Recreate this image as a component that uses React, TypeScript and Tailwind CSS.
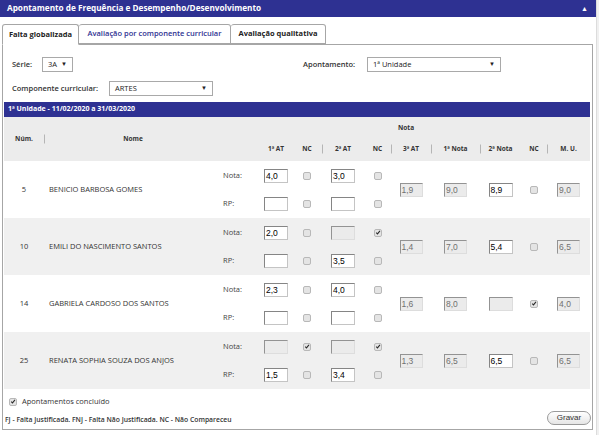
import React from 'react';

type Val = { v?: string; on: boolean };

type Student = {
  num: string;
  name: string;
  nota: [Val, boolean, Val, boolean];
  rp: [Val, boolean, Val, boolean];
  at3: string;
  nota1: string;
  nota2: Val;
  nc: boolean;
  mu: string;
};

const STUDENTS: Student[] = [
  {
    num: '5',
    name: 'BENICIO BARBOSA GOMES',
    nota: [{ v: '4,0', on: true }, false, { v: '3,0', on: true }, false],
    rp: [{ on: true }, false, { on: true }, false],
    at3: '1,9',
    nota1: '9,0',
    nota2: { v: '8,9', on: true },
    nc: false,
    mu: '9,0',
  },
  {
    num: '10',
    name: 'EMILI DO NASCIMENTO SANTOS',
    nota: [{ v: '2,0', on: true }, false, { on: false }, true],
    rp: [{ on: true }, false, { v: '3,5', on: true }, false],
    at3: '1,4',
    nota1: '7,0',
    nota2: { v: '5,4', on: true },
    nc: false,
    mu: '6,5',
  },
  {
    num: '14',
    name: 'GABRIELA CARDOSO DOS SANTOS',
    nota: [{ v: '2,3', on: true }, false, { v: '4,0', on: true }, false],
    rp: [{ on: true }, false, { on: true }, false],
    at3: '1,6',
    nota1: '8,0',
    nota2: { on: false },
    nc: true,
    mu: '4,0',
  },
  {
    num: '25',
    name: 'RENATA SOPHIA SOUZA DOS ANJOS',
    nota: [{ on: false }, true, { on: false }, true],
    rp: [{ v: '1,5', on: true }, false, { v: '3,4', on: true }, false],
    at3: '1,3',
    nota1: '6,5',
    nota2: { v: '6,5', on: true },
    nc: false,
    mu: '6,5',
  },
];

function Box({ v, on, w = 'w-[24px]' }: { v?: string; on: boolean; w?: string }) {
  return (
    <div
      className={`mx-auto h-[14px] ${w} border px-px text-left font-['Liberation_Sans',Arial,sans-serif] text-[8.5px] leading-[12px] ${
        on
          ? 'border-[#858585] border-b-[#c4c4c4] border-r-[#c4c4c4] bg-white text-black'
          : 'border-[#939393] border-b-[#dddddd] border-r-[#dddddd] bg-[#ebebeb] text-[#707070]'
      }`}
    >
      {v}
    </div>
  );
}

function Chk({ on, center = true }: { on: boolean; center?: boolean }) {
  return (
    <div
      className={`${center ? 'mx-auto' : ''} flex h-[8px] w-[8px] shrink-0 items-center justify-center rounded-[2px] border border-[#b8b8b8] bg-[#e4e4e4]`}
    >
      {on && (
        <svg viewBox="0 0 8 8" className="h-[7px] w-[7px]">
          <path d="M1.6 4.3 L3.3 5.9 L6.6 1.9" stroke="#2b2b2b" strokeWidth="1.4" fill="none" />
        </svg>
      )}
    </div>
  );
}

function Sep() {
  return <span className="absolute left-0 top-1/2 h-[9px] w-px -translate-y-1/2 bg-[#b5b5b5]" />;
}

function Select({ text, w }: { text: string; w: string }) {
  return (
    <div className={`flex h-[15px] ${w} items-center justify-between border border-[#a9a9a9] bg-white pl-[5px] pr-[5px] text-[7.5px] text-[#222]`}>
      <span>{text}</span>
      <span className="text-[6px] text-[#222]">▼</span>
    </div>
  );
}

const App: React.FC = () => {
  return (
    <div className="flex h-[435px] w-[599px] overflow-hidden bg-white font-['Open_Sans',sans-serif] text-[#333]">
      <div className="w-[596px]">
        {/* title bar */}
        <div className="flex h-[17px] items-center justify-between bg-[#2e3192] pl-[7px] pr-[8px]">
          <span className="text-[8.2px] font-bold text-white">Apontamento de Frequência e Desempenho/Desenvolvimento</span>
          <span className="text-[7px] leading-none text-white">▲</span>
        </div>

        {/* tabs */}
        <div className="mt-[7px] flex pl-[2px] text-[7.5px]">
          <div className="relative z-10 -mb-px flex h-[21px] w-[77px] items-center justify-center rounded-t-[3px] border border-b-white border-[#a6a6a6] bg-white font-bold text-[#222]">
            Falta globalizada
          </div>
          <div className="flex h-[20px] w-[152px] items-center justify-center rounded-t-[3px] border border-l-0 border-[#a6a6a6] bg-white font-semibold text-[#2e3192]">
            Avaliação por componente curricular
          </div>
          <div className="flex h-[20px] w-[95px] items-center justify-center rounded-t-[3px] border border-l-0 border-[#a6a6a6] bg-white font-bold text-[#222]">
            Avaliação qualitativa
          </div>
        </div>

        {/* panel */}
        <div className="ml-[2px] h-[386px] w-[591px] border border-[#a6a6a6]">
          <div className="flex items-center pl-[9px] pt-[12px]">
            <div className="flex w-[291px] items-center">
              <span className="w-[30px] text-[7.5px] font-semibold">Série:</span>
              <Select text="3A" w="w-[31px]" />
            </div>
            <span className="w-[64px] text-[7.5px] font-semibold">Apontamento:</span>
            <Select text="1ª Unidade" w="w-[134px]" />
          </div>
          <div className="flex items-center pl-[9px] pt-[9px]">
            <span className="w-[97px] text-[7.5px] font-semibold">Componente curricular:</span>
            <Select text="ARTES" w="w-[104px]" />
          </div>

          <div className="ml-px mt-[6px] w-[586px]">
            <div className="flex h-[15px] items-center bg-[#2e3192] pl-[4px] text-[7px] font-bold text-white">
              1ª Unidade - 11/02/2020 a 31/03/2020
            </div>
            <table className="w-[586px] table-fixed border-collapse text-[7.5px]">
              <colgroup>
                <col className="w-[40px]" />
                <col className="w-[178px]" />
                <col className="w-[38px]" />
                <col className="w-[32px]" />
                <col className="w-[30px]" />
                <col className="w-[42px]" />
                <col className="w-[27px]" />
                <col className="w-[40px]" />
                <col className="w-[49px]" />
                <col className="w-[41px]" />
                <col className="w-[26px]" />
                <col className="w-[43px]" />
              </colgroup>
              <thead className="bg-[#ececec] text-[6.5px] font-bold text-[#333]">
                <tr className="h-[20px]">
                  <th rowSpan={2} className="font-bold">Núm.</th>
                  <th rowSpan={2} className="relative font-bold">
                    <Sep />
                    Nome
                  </th>
                  <th colSpan={10} className="pt-[2px] font-bold">Nota</th>
                </tr>
                <tr className="h-[24px]">
                  <th />
                  <th className="font-bold">1ª AT</th>
                  <th className="font-bold">NC</th>
                  <th className="relative font-bold"><Sep />2ª AT</th>
                  <th className="font-bold">NC</th>
                  <th className="relative font-bold"><Sep />3ª AT</th>
                  <th className="relative font-bold"><Sep />1ª Nota</th>
                  <th className="relative font-bold"><Sep />2ª Nota</th>
                  <th className="font-bold">NC</th>
                  <th className="relative font-bold"><Sep />M. U.</th>
                </tr>
              </thead>
              <tbody>
                {STUDENTS.map((s, i) => {
                  const bg = i % 2 === 1 ? 'bg-[#f0f0f0]' : 'bg-white';
                  return (
                    <React.Fragment key={s.num}>
                      <tr className={`h-[29px] ${bg}`}>
                        <td rowSpan={2} className="text-center text-[7.5px]">{s.num}</td>
                        <td rowSpan={2} className="pl-[5px] text-[7.5px]">{s.name}</td>
                        <td className="pl-px text-[7.5px] text-[#444]">Nota:</td>
                        <td><Box v={s.nota[0].v} on={s.nota[0].on} /></td>
                        <td><Chk on={s.nota[1]} /></td>
                        <td><Box v={s.nota[2].v} on={s.nota[2].on} /></td>
                        <td><Chk on={s.nota[3]} /></td>
                        <td rowSpan={2}><Box v={s.at3} on={false} w="w-[23px]" /></td>
                        <td rowSpan={2}><Box v={s.nota1} on={false} w="w-[23px]" /></td>
                        <td rowSpan={2}><Box v={s.nota2.v} on={s.nota2.on} /></td>
                        <td rowSpan={2}><Chk on={s.nc} /></td>
                        <td rowSpan={2}><Box v={s.mu} on={false} w="w-[23px]" /></td>
                      </tr>
                      <tr className={`h-[28px] ${bg}`}>
                        <td className="pl-px text-[7.5px] text-[#444]">RP:</td>
                        <td><Box v={s.rp[0].v} on={s.rp[0].on} /></td>
                        <td><Chk on={s.rp[1]} /></td>
                        <td><Box v={s.rp[2].v} on={s.rp[2].on} /></td>
                        <td><Chk on={s.rp[3]} /></td>
                      </tr>
                    </React.Fragment>
                  );
                })}
              </tbody>
            </table>
          </div>

          <div className="mt-[7px] flex items-center gap-[5px] pl-[6px] text-[7.5px]">
            <Chk on={true} center={false} />
            <span>Apontamentos concluído</span>
          </div>
          <div className="mt-[4px] flex items-end justify-between pl-[2px] pr-[1px]">
            <span className="text-[6.8px] font-semibold text-[#333]">
              FJ - Falta Justificada. FNJ - Falta Não Justificada. NC - Não Compareceu
            </span>
            <div className="flex h-[14px] w-[44px] items-center justify-center rounded-full border border-[#9a9a9a] bg-gradient-to-b from-white to-[#e6e6e6] font-['Liberation_Sans',Arial,sans-serif] text-[8px] text-[#333]">
              Gravar
            </div>
          </div>
        </div>
      </div>
      <div className="h-full w-[3px] border-l border-[#dcdcdc] bg-[#f0f0f0]" />
    </div>
  );
};

export default App;
